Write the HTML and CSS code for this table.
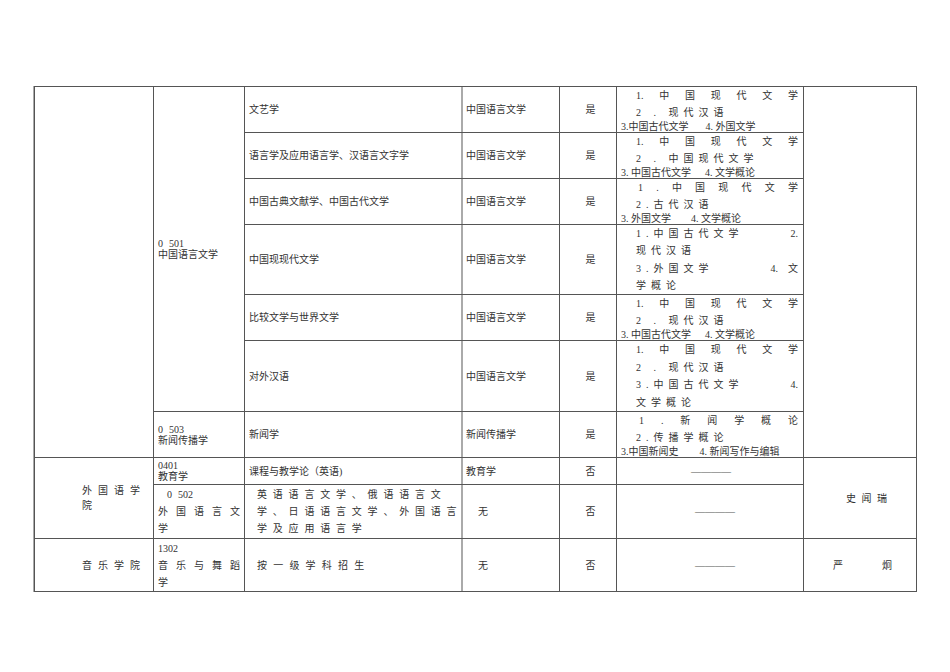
FILE: index.html
```html
<!DOCTYPE html>
<html lang="zh-CN">
<head>
<meta charset="utf-8">
<title>招生目录</title>
<link rel="stylesheet" href="styles.css">
</head>
<body>
<div class="sheet">
  <!-- row 1 -->
  <div class="cell span7"></div>
  <div class="cell code span6"><div>0<span class="ml6">501</span></div><div>中国语言文学</div></div>
  <div class="cell sub">文艺学</div>
  <div class="cell dept">中国语言文学</div>
  <div class="cell yes">是</div>
  <div class="cell req">
    <div class="ln j ind"><span>1.</span><span>中</span><span>国</span><span>现</span><span>代</span><span>文</span><span>学</span></div>
    <div class="ln ind sp5">2 . 现代汉语</div>
    <div class="ln last">3.中国古代文学<span class="g18">4. 外国文学</span></div>
  </div>
  <div class="cell span7"></div>

  <!-- row 2 -->
  <div class="cell sub">语言学及应用语言学、汉语言文字学</div>
  <div class="cell dept">中国语言文学</div>
  <div class="cell yes">是</div>
  <div class="cell req">
    <div class="ln j ind"><span>1.</span><span>中</span><span>国</span><span>现</span><span>代</span><span>文</span><span>学</span></div>
    <div class="ln ind sp5">2 . 中国现代文学</div>
    <div class="ln last">3. 中国古代文学<span class="g14">4. 文学概论</span></div>
  </div>

  <!-- row 3 -->
  <div class="cell sub">中国古典文献学、中国古代文学</div>
  <div class="cell dept">中国语言文学</div>
  <div class="cell yes">是</div>
  <div class="cell req">
    <div class="ln j ind2"><span>1</span><span>.</span><span>中</span><span>国</span><span>现</span><span>代</span><span>文</span><span>学</span></div>
    <div class="ln ind sp5">2.古代汉语</div>
    <div class="ln last">3. 外国文学<span class="g20">4. 文学概论</span></div>
  </div>

  <!-- row 4 -->
  <div class="cell sub">中国现现代文学</div>
  <div class="cell dept">中国语言文学</div>
  <div class="cell yes">是</div>
  <div class="cell req req4">
    <div class="ln j ind"><span class="sp5">1.中国古代文学</span><span>2.</span></div>
    <div class="ln ind sp5">现代汉语</div>
    <div class="ln j ind"><span class="sp5">3.外国文学</span><span>4.　文</span></div>
    <div class="ln ind sp5">学概论</div>
  </div>

  <!-- row 5 -->
  <div class="cell sub">比较文学与世界文学</div>
  <div class="cell dept">中国语言文学</div>
  <div class="cell yes">是</div>
  <div class="cell req">
    <div class="ln j ind"><span>1.</span><span>中</span><span>国</span><span>现</span><span>代</span><span>文</span><span>学</span></div>
    <div class="ln ind sp5">2 . 现代汉语</div>
    <div class="ln last">3. 中国古代文学<span class="g14">4. 文学概论</span></div>
  </div>

  <!-- row 6 -->
  <div class="cell sub">对外汉语</div>
  <div class="cell dept">中国语言文学</div>
  <div class="cell yes">是</div>
  <div class="cell req req4">
    <div class="ln j ind"><span>1.</span><span>中</span><span>国</span><span>现</span><span>代</span><span>文</span><span>学</span></div>
    <div class="ln ind sp5">2 . 现代汉语</div>
    <div class="ln j ind"><span class="sp5">3.中国古代文学</span><span>4.</span></div>
    <div class="ln ind sp5">文学概论</div>
  </div>

  <!-- row 7 -->
  <div class="cell code"><div>0<span class="ml6">503</span></div><div>新闻传播学</div></div>
  <div class="cell sub">新闻学</div>
  <div class="cell dept">新闻传播学</div>
  <div class="cell yes">是</div>
  <div class="cell req">
    <div class="ln j ind3"><span>1</span><span>.</span><span>新</span><span>闻</span><span>学</span><span>概</span><span>论</span></div>
    <div class="ln ind sp5">2.传播学概论</div>
    <div class="ln last">3.中国新闻史<span class="g22">4. 新闻写作与编辑</span></div>
  </div>

  <!-- row 8 -->
  <div class="cell inst span2"><div class="ls6">外国语学</div><div>院</div></div>
  <div class="cell code"><div>0401</div><div>教育学</div></div>
  <div class="cell sub">课程与教学论（英语)</div>
  <div class="cell dept">教育学</div>
  <div class="cell yes">否</div>
  <div class="cell dash">————</div>
  <div class="cell span2 name"><div class="ls55">史闻瑞</div></div>

  <!-- row 9 -->
  <div class="cell code code3"><div class="ml9">0<span class="ml6">502</span></div><div class="ls8">外国语言文</div><div>学</div></div>
  <div class="cell sub sub3">
    <div class="ls58">英语语言文学、俄语语言文</div>
    <div class="ls58">学、日语语言文学、外国语言</div>
    <div class="ls58">学及应用语言学</div>
  </div>
  <div class="cell dept wu">无</div>
  <div class="cell yes">否</div>
  <div class="cell dash dash2">————</div>

  <!-- row 10 -->
  <div class="cell inst"><div class="ls6">音乐学院</div></div>
  <div class="cell code code3"><div>1302</div><div class="ls8">音乐与舞蹈</div><div>学</div></div>
  <div class="cell sub sub3"><div class="ls62">按一级学科招生</div></div>
  <div class="cell dept wu">无</div>
  <div class="cell yes">否</div>
  <div class="cell dash dash2">————</div>
  <div class="cell name name2"><div>严<span class="ml39">炯</span></div></div>
</div>
</body>
</html>
```

FILE: styles.css
```css
* { box-sizing: border-box; }
html, body { margin: 0; padding: 0; background: #fff; }
body {
  font-family: "Liberation Serif", "Noto Sans CJK SC", serif;
  font-size: 10px;
  color: #333;
}
.sheet {
  margin: 86px 0 0 34px;
  width: 883px;
  display: grid;
  grid-template-columns: 118px 90px 217px 96px 56px 186px 112px;
  grid-template-rows: 45px 45px 45px 69px 45px 70px 45px 26px 53px 52px;
  gap: 1px;
  padding: 1px;
  background: #555;
  box-shadow: 0 1px 0 #aaa, -1px 0 0 #aaa;
}
.cell {
  background: #fff;
  display: flex;
  flex-direction: column;
  justify-content: center;
  line-height: 11px;
  white-space: nowrap;
  min-width: 0;
}
.span7 { grid-row: span 7; }
.span6 { grid-row: span 6; }
.span2 { grid-row: span 2; }

.code { padding-left: 4px; }
.code3 { line-height: 17px; }
.sub { padding-left: 4px; }
.sub3 { padding-left: 12px; line-height: 17px; }
.dept { padding-left: 3px; box-shadow: -2px 0 0 #aaa; }
.wu { padding-left: 15px; }
.yes { align-items: center; padding-left: 5px; }

.req { justify-content: flex-start; padding: 0 5px 0 4px; }
.ln { display: flex; align-items: center; height: 17px; }
.ln.last { height: 11px; }
.req4 .ln { height: auto; flex: 1 1 0; }
.j { justify-content: space-between; }
.ind { padding-left: 15px; }
.ind2 { padding-left: 17px; }
.ind3 { padding-left: 18px; }
.sp5 { letter-spacing: 5px; }
.g14 { margin-left: 14px; }
.g18 { margin-left: 17px; }
.g20 { margin-left: 20px; }
.g22 { margin-left: 21px; }

.inst { padding-left: 47px; line-height: 15px; }
.ls6 { letter-spacing: 6px; }
.ls8 { letter-spacing: 8px; }
.ls55 { letter-spacing: 5.5px; }
.ls58 { letter-spacing: 5.8px; }
.ls62 { letter-spacing: 6.2px; }
.ml6 { margin-left: 6px; }
.ml9 { padding-left: 9px; }
.ml39 { margin-left: 39px; }

.dash { padding-left: 74px; color: #555; }
.dash2 { padding-left: 78px; }
.name { padding-left: 42px; }
.name2 { padding-left: 29px; }
```
